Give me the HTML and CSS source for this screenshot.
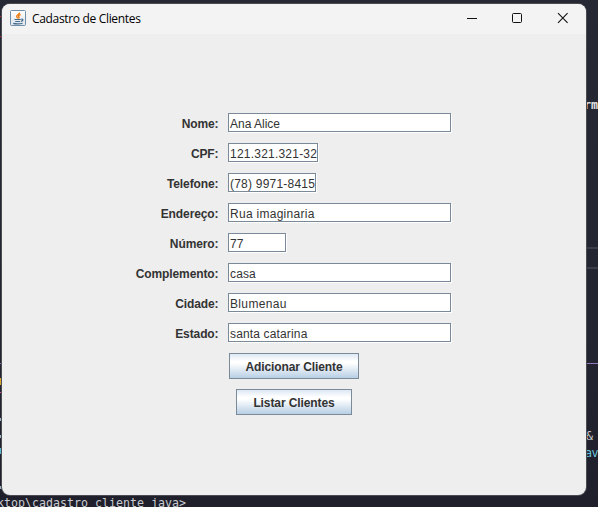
FILE: index.html
```html
<!DOCTYPE html>
<html lang="pt-BR">
<head>
<meta charset="utf-8">
<title>Cadastro de Clientes</title>
<link rel="stylesheet" href="styles.css">
</head>
<body>
<div class="terminal">
  <i class="mark red m1"></i><i class="mark red m2"></i>
  <i class="rule r1"></i><i class="rule r2"></i><i class="rule r3"></i>
  <i class="mark lilac m3"></i><i class="mark gold m4"></i><i class="mark pink m5"></i>
  <i class="mark pale m6"></i><i class="mark pale m7"></i><i class="mark cyan m8"></i><i class="mark pale m9"></i>
  <span class="code c1">rm</span>
  <span class="code c2">&amp;</span>
  <span class="code c3">av</span>
  <span class="code c4">ktop\cadastro_cliente_java&gt;</span>
</div>
<main class="window">
  <header class="titlebar">
    <svg class="java" width="16" height="16" viewBox="0 0 16 16">
      <defs><linearGradient id="g" x1="0" y1="0" x2="0" y2="1"><stop offset="0" stop-color="#fff"/><stop offset="1" stop-color="#dde4ea"/></linearGradient></defs>
      <rect x=".5" y=".5" width="15" height="15" rx="1" fill="url(#g)" stroke="#6f8fa9"/>
      <path d="M9.500 2.500C10 4.500 6.500 4.500 6.700 6.300c.1.9 1 1.200 1 2.200M10.800 4.600C8.500 5.200 8.200 6 9 7c.3.5 0 1-.5 1.400" fill="none" stroke="#ee7d12" stroke-width="1.400"/>
      <path d="M4.500 9.500h6.300M5.200 11.500h5M11.300 9.300c2.200-.6 2.200 1.500-.2 2M3.300 13.400c2 .7 7 .7 9.200-.1" fill="none" stroke="#456b8b" stroke-width="1.200"/>
    </svg>
    <h1>Cadastro de Clientes</h1>
    <svg class="controls" width="138" height="30" viewBox="0 0 138 30" fill="none" stroke="#111">
      <path d="M19 14.500h10"/>
      <rect x="64.500" y="9.500" width="9" height="9" rx="1"/>
      <path d="M110 9.200l9.600 9.600M119.600 9.200l-9.600 9.600" stroke-width="1.100"/>
    </svg>
  </header>
  <form class="form">
    <label>Nome:</label><span class="field name">Ana Alice</span>
    <label>CPF:</label><span class="field cpf">121.321.321-32</span>
    <label>Telefone:</label><span class="field phone">(78) 9971-8415</span>
    <label>Endereço:</label><span class="field street">Rua imaginaria</span>
    <label>Número:</label><span class="field number">77</span>
    <label>Complemento:</label><span class="field">casa</span>
    <label>Cidade:</label><span class="field city">Blumenau</span>
    <label>Estado:</label><span class="field">santa catarina</span>
  </form>
  <div class="actions">
    <button class="add" type="button">Adicionar Cliente</button>
    <button class="list" type="button">Listar Clientes</button>
  </div>
</main>
</body>
</html>
```
FILE: styles.css
```css
* { box-sizing: border-box; }
body {
  margin: 0;
  width: 598px;
  height: 507px;
  overflow: hidden;
  background: #242631;
  padding: 4px 0 0 2px;
  position: relative;
}
.terminal {
  position: absolute;
  inset: 0;
  overflow: hidden;
  background: linear-gradient(#262833, #22242f 70%, #1f202b);
}
.code {
  position: absolute;
  font: 11.63px/14px "DejaVu Sans Mono", monospace;
  color: #c9cbd0;
  white-space: pre;
}
.c1 { left: 584px; top: 98px; font-weight: bold; color: #e4e4e4; }
.c2 { left: 586px; top: 429px; }
.c3 { left: 585px; top: 446px; letter-spacing: -0.5px; color: #68c5db; }
.c4 { left: -3px; top: 496px; }
.mark { position: absolute; left: 0; width: 2px; height: 1px; }
.red { background: #b52a35; }
.lilac { background: #8a78b0; }
.gold { background: #d9a62e; }
.pink { background: #d3559b; }
.pale { background: #9fb3c0; }
.cyan { background: #55b8cc; }
.m1 { top: 16px; }
.m2 { top: 36px; }
.m3 { top: 363px; }
.m4 { top: 378px; height: 7px; }
.m5 { top: 392px; }
.m6 { top: 418px; height: 3px; }
.m7 { top: 435px; height: 3px; }
.m8 { top: 448px; height: 6px; }
.m9 { top: 486px; height: 3px; }
.rule { position: absolute; left: 586px; right: 0; height: 2px; background: #3b3d4a; }
.r1 { top: 247px; }
.r2 { top: 267px; }
.r3 { top: 363px; height: 1px; background: #9279bd; }
.window {
  position: relative;
  width: 584px;
  height: 491px;
  overflow: hidden;
  border-radius: 8px;
  background: #eee;
  box-shadow: 0 0 0 1px #4a4c52;
}
.titlebar {
  display: flex;
  align-items: center;
  height: 30px;
  padding-left: 8px;
  background: #f3f3f3;
}
.java { flex: none; margin-top: -2px; }
h1 {
  flex: 1;
  margin: 0 0 0 6px;
  font: 12px/16px "Open Sans", "Noto Sans", sans-serif;
  letter-spacing: -0.33px;
  color: #000;
}
.form {
  display: grid;
  grid-template-columns: 216px 1fr;
  grid-auto-rows: 20px;
  gap: 10px;
  margin-top: 79px;
}
label, .field, button {
  font-family: "Liberation Sans", Arial, sans-serif;
  font-size: 12px;
  color: #333;
}
label {
  font-weight: bold;
  line-height: 22px;
  text-align: right;
  letter-spacing: -0.1px;
  margin-right: -0.5px;
}
.field {
  width: 223px;
  height: 19px;
  border: 1px solid #7a8a99;
  box-shadow: 1px 1px 0 #fff;
  background: #fff;
  padding-left: 1px;
  line-height: 20px;
  letter-spacing: 0.15px;
  white-space: nowrap;
}
.name { letter-spacing: 0; }
.cpf { width: 90px; letter-spacing: 0.22px; }
.phone { width: 88px; letter-spacing: 0.22px; }
.number { width: 58px; }
.street { letter-spacing: 0.28px; }
.city { letter-spacing: 0.35px; }
.actions {
  display: flex;
  flex-direction: column;
  align-items: flex-start;
  gap: 10px;
  margin: 10px 0 0 227px;
}
button {
  height: 26px;
  padding: 2px 0 0;
  border: 1px solid #7a8a99;
  border-radius: 0;
  background: linear-gradient(#dde8f3, #fff 30%, #fff 38%, #b8cfe5);
  font-weight: bold;
  letter-spacing: -0.1px;
}
.add { width: 130px; }
.list { width: 116px; margin-left: 7px; }
```
